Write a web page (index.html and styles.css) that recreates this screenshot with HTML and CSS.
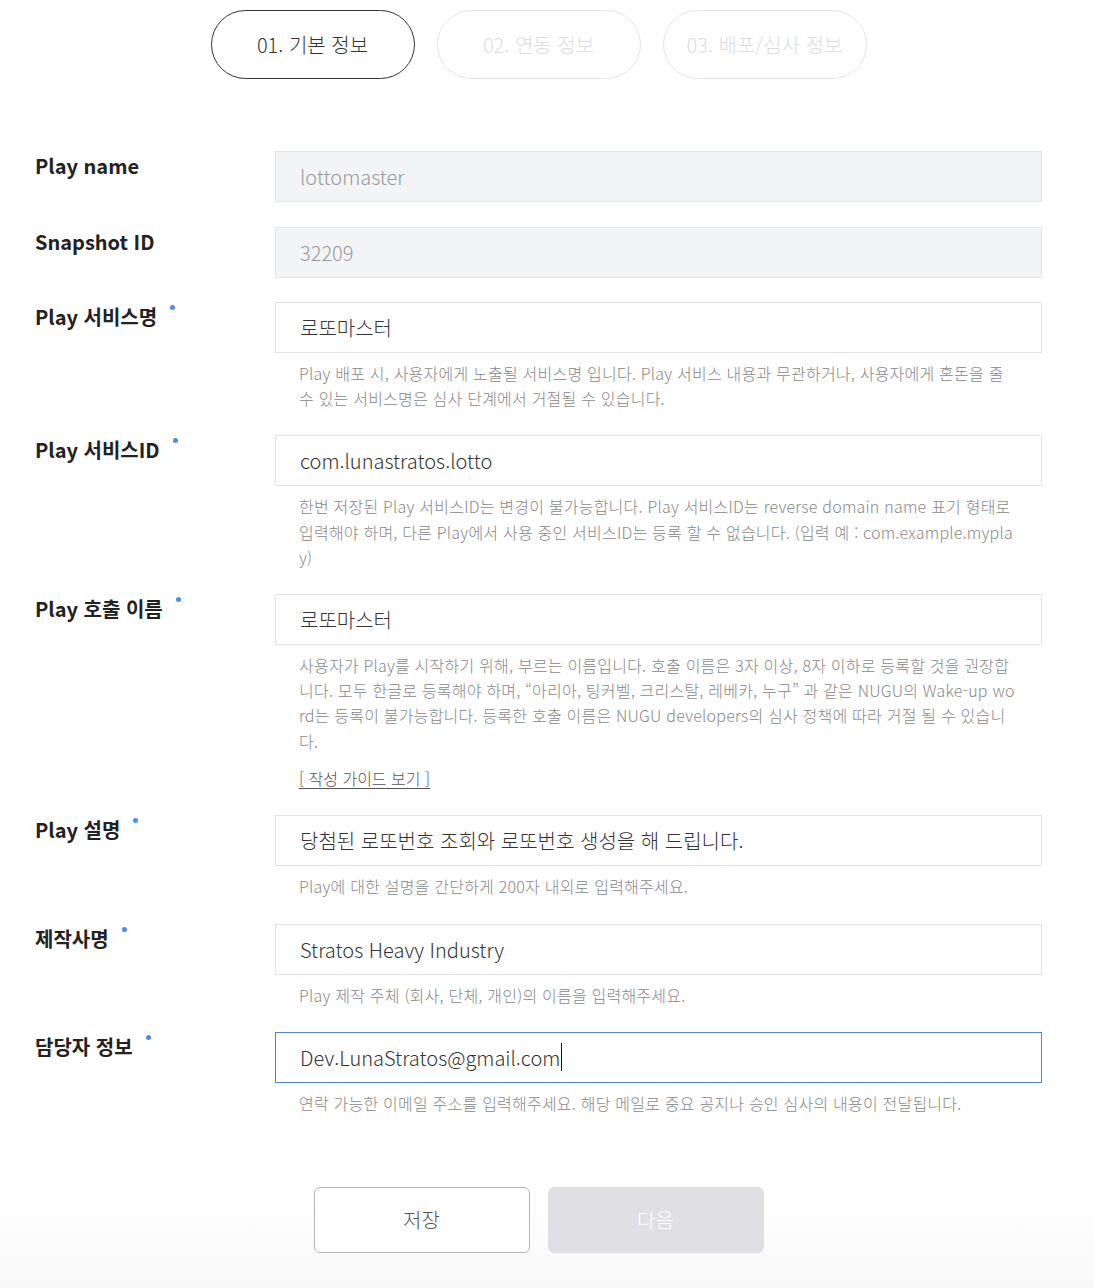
FILE: index.html
```html
<!DOCTYPE html>
<html lang="ko">
<head>
<meta charset="utf-8">
<link rel="stylesheet" href="styles.css">
</head>
<body>
<div class="page">
  <div class="steps">
    <div class="step active">01. 기본 정보</div>
    <div class="step">02. 연동 정보</div>
    <div class="step">03. 배포/심사 정보</div>
  </div>

  <div class="form">
    <div class="row first">
      <div class="label">Play name</div>
      <div class="field">
        <div class="input disabled">lottomaster</div>
      </div>
    </div>
    <div class="row">
      <div class="label">Snapshot ID</div>
      <div class="field">
        <div class="input disabled">32209</div>
      </div>
    </div>
    <div class="row">
      <div class="label req">Play 서비스명</div>
      <div class="field">
        <div class="input">로또마스터</div>
        <p class="help">Play 배포 시, 사용자에게 노출될 서비스명 입니다. Play 서비스 내용과 무관하거나, 사용자에게 혼돈을 줄 수 있는 서비스명은 심사 단계에서 거절될 수 있습니다.</p>
      </div>
    </div>
    <div class="row">
      <div class="label req">Play 서비스ID</div>
      <div class="field">
        <div class="input">com.lunastratos.lotto</div>
        <p class="help">한번 저장된 Play 서비스ID는 변경이 불가능합니다. Play 서비스ID는 reverse domain name 표기 형태로 입력해야 하며, 다른 Play에서 사용 중인 서비스ID는 등록 할 수 없습니다. (입력 예 : com.example.myplay)</p>
      </div>
    </div>
    <div class="row">
      <div class="label req">Play 호출 이름</div>
      <div class="field">
        <div class="input">로또마스터</div>
        <p class="help">사용자가 Play를 시작하기 위해, 부르는 이름입니다. 호출 이름은 3자 이상, 8자 이하로 등록할 것을 권장합니다. 모두 한글로 등록해야 하며, “아리아, 팅커벨, 크리스탈, 레베카, 누구” 과 같은 NUGU의 Wake-up word는 등록이 불가능합니다. 등록한 호출 이름은 NUGU developers의 심사 정책에 따라 거절 될 수 있습니다.</p>
        <a class="guide">[ 작성 가이드 보기 ]</a>
      </div>
    </div>
    <div class="row">
      <div class="label req">Play 설명</div>
      <div class="field">
        <div class="input">당첨된 로또번호 조회와 로또번호 생성을 해 드립니다.</div>
        <p class="help">Play에 대한 설명을 간단하게 200자 내외로 입력해주세요.</p>
      </div>
    </div>
    <div class="row">
      <div class="label req">제작사명</div>
      <div class="field">
        <div class="input">Stratos Heavy Industry</div>
        <p class="help">Play 제작 주체 (회사, 단체, 개인)의 이름을 입력해주세요.</p>
      </div>
    </div>
    <div class="row">
      <div class="label req">담당자 정보</div>
      <div class="field">
        <div class="input focus">Dev.LunaStratos@gmail.com<span class="caret"></span></div>
        <p class="help">연락 가능한 이메일 주소를 입력해주세요. 해당 메일로 중요 공지나 승인 심사의 내용이 전달됩니다.</p>
      </div>
    </div>
  </div>
</div>
<div class="actions">
  <div class="actions-inner">
    <button class="btn save">저장</button>
    <button class="btn next">다음</button>
  </div>
</div>
</body>
</html>
```

FILE: styles.css
```css
* { box-sizing: border-box; }
html, body { margin: 0; padding: 0; background: #fff; }
body {
  font-family: "Noto Sans CJK KR", "Noto Sans", sans-serif;
  color: #333;
}
.page {
  width: 1007px;
  margin-left: 35px;
  padding-top: 10px;
}
.steps {
  display: flex;
  justify-content: center;
  gap: 22px;
}
.step {
  width: 204px;
  height: 69px;
  border: 1px solid #e4e5ea;
  border-radius: 35px;
  display: flex;
  align-items: center;
  justify-content: center;
  font-size: 20px;
  font-weight: 300;
  color: #dcdde2;
}
.step.active {
  border-color: #333;
  color: #333;
}
.form {
  margin-top: 72px;
  display: flex;
  flex-direction: column;
  gap: 24px;
}
.row {
  display: flex;
}
.row.first {
  margin-bottom: 1px;
}
.label {
  width: 240px;
  flex: none;
  font-size: 20px;
  font-weight: 700;
  line-height: 30px;
  color: #222;
}
.label.req::after {
  content: "";
  display: inline-block;
  width: 5px;
  height: 5px;
  border-radius: 50%;
  background: #4a8ee6;
  margin-left: 13px;
  vertical-align: 15px;
}
.field {
  flex: 1;
}
.input {
  height: 51px;
  border: 1px solid #e3e5e8;
  padding: 0 24px;
  display: flex;
  align-items: center;
  font-size: 20px;
  font-weight: 300;
  color: #333;
  background: #fff;
}
.input.disabled {
  background: #f3f4f6;
  color: #999;
}
.input.focus {
  border-color: #4a86d6;
}
.caret {
  display: inline-block;
  width: 1px;
  height: 28px;
  background: #111;
  margin-left: 1px;
}
.help {
  margin: 8px 0 0;
  padding: 0 24px;
  font-size: 16px;
  font-weight: 300;
  line-height: 25.2px;
  letter-spacing: 0.22px;
  color: #888;
  word-break: break-all;
}
.guide {
  display: inline-block;
  margin: 11.5px 0 0 24px;
  font-size: 16px;
  font-weight: 300;
  line-height: 26px;
  color: #555;
  text-decoration: underline;
  text-underline-offset: 3px;
}
.actions {
  margin-top: 71px;
  height: 150px;
  background: linear-gradient(to bottom, #ffffff 0%, #ffffff 10%, #f3f3f3 100%);
}
.actions-inner {
  width: 1007px;
  margin-left: 35px;
  display: flex;
  justify-content: center;
  gap: 18px;
}
.btn {
  width: 216px;
  height: 66px;
  border-radius: 6px;
  font-family: inherit;
  font-size: 20px;
  font-weight: 300;
}
.btn.save {
  background: #fff;
  border: 1px solid #b5b5b8;
  color: #555;
}
.btn.next {
  background: #dfdfe4;
  border: 1px solid #dfdfe4;
  color: #fff;
}
```
